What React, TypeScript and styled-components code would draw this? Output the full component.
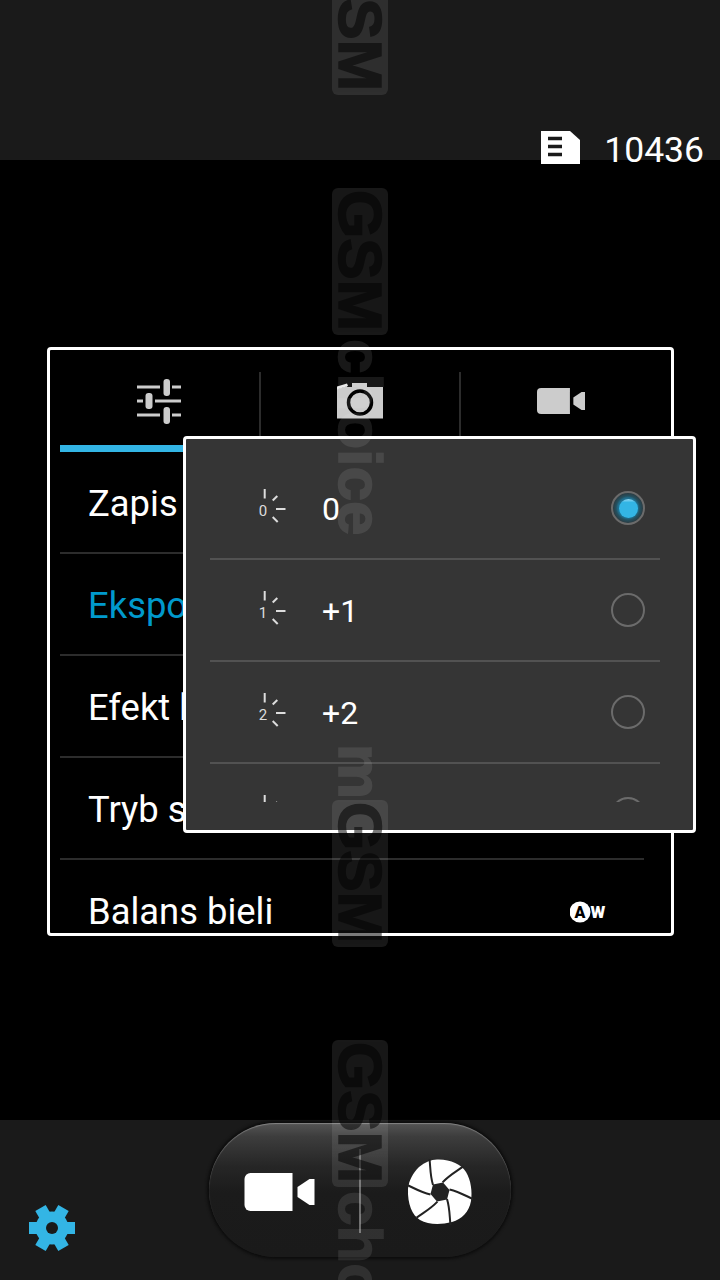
import React from "react";
import styled, { createGlobalStyle } from "styled-components";

const Global = createGlobalStyle`
  html, body { margin: 0; padding: 0; background: #000; }
  * { box-sizing: border-box; }
`;

const Screen = styled.div`
  position: relative;
  width: 720px;
  height: 1280px;
  overflow: hidden;
  display: flex;
  flex-direction: column;
  background: #000;
  color: #fff;
  font-family: Roboto, "Liberation Sans", sans-serif;
`;

const TopBar = styled.div`
  position: relative;
  flex: 0 0 160px;
  background: #1a1a1a;
`;

const Counter = styled.div`
  position: absolute;
  top: 131px;
  right: 16px;
  display: flex;
  align-items: flex-start;
  gap: 24px;
  font-size: 35.5px;
  line-height: 38px;
  color: #fff;
`;

const Viewfinder = styled.div`
  position: relative;
  flex: 1;
  padding: 187px 0 0 47px;
`;

const Panel = styled.div`
  width: 627px;
  height: 589px;
  border: 3px solid #fff;
  border-radius: 4px;
  padding: 0 10px;
  overflow: hidden;
  background: #000;
`;

const TabStrip = styled.div`
  display: flex;
  height: 102px;
`;

const Tab = styled.div<{ $active?: boolean }>`
  flex: 0 0 198.5px;
  display: flex;
  align-items: center;
  justify-content: center;
  padding-top: 7px;
  border-bottom: 7px solid ${(p) => (p.$active ? "#33b5e5" : "transparent")};

  &:last-child {
    flex: 1;
  }
`;

const TabDivider = styled.div`
  flex: 0 0 2px;
  margin: 22px 0 14px;
  background: #2c2c2c;
`;

const SettingRow = styled.div`
  height: 102px;
  margin-right: 17px;
  padding: 3px 37px 0 28px;
  display: flex;
  align-items: center;
  justify-content: space-between;
  border-bottom: 2px solid #2c2c2c;
`;

const SettingLabel = styled.span<{ $active?: boolean }>`
  font-size: 36.4px;
  white-space: nowrap;
  color: ${(p) => (p.$active ? "#0099cc" : "#fff")};
`;

const Popup = styled.div`
  position: absolute;
  top: 276px;
  left: 183px;
  width: 513px;
  height: 397px;
  border: 3px solid #fff;
  border-radius: 4px;
  padding: 19px 33px 0 24px;
  background: #353535;
`;

const PopupList = styled.div`
  height: 344px;
  overflow: hidden;
`;

const PopupRow = styled.div`
  height: 102px;
  padding: 0 15px 0 48px;
  display: flex;
  align-items: center;
  gap: 36px;
  border-bottom: 2px solid #525252;
`;

const PopupLabel = styled.span`
  flex: 1;
  padding-top: 1px;
  font-size: 32px;
  color: #fff;
`;

const Radio = styled.span<{ $checked?: boolean }>`
  flex: 0 0 34px;
  width: 34px;
  height: 34px;
  border-radius: 50%;
  border: 2px solid #6b6b6b;
  display: flex;
  align-items: center;
  justify-content: center;
  background: ${(p) =>
    p.$checked
      ? "radial-gradient(circle, #1f6f8f 0 10px, #24505f 12px, #2c3c43 15px)"
      : "transparent"};
`;

const RadioDot = styled.span`
  width: 19px;
  height: 19px;
  border-radius: 50%;
  background: linear-gradient(#9adcf5 0, #33b5e5 18%, #33b5e5 100%);
`;

const BottomBar = styled.div`
  flex: 0 0 160px;
  display: grid;
  grid-template-columns: 1fr auto 1fr;
  background: #1a1a1a;
`;

const SettingsSlot = styled.div`
  padding: 85px 0 0 29px;
`;

const Pill = styled.div`
  width: 302px;
  height: 134px;
  margin-top: 3px;
  padding-top: 4px;
  border-radius: 67px;
  display: flex;
  align-items: center;
  background: linear-gradient(#555 0, #3d3d3d 10%, #262626 32%, #1b1b1b 52%, #1a1a1a 100%);
  box-shadow: inset 0 1px 1px rgba(255, 255, 255, 0.28), 0 0 3px 2px #0c0c0c;
`;

const PillHalf = styled.div<{ $inset: number }>`
  flex: 0 0 150px;
  display: flex;
  align-items: center;
  padding-left: ${(p) => p.$inset}px;
`;

const PillDivider = styled.div`
  flex: 0 0 2px;
  height: 84px;
  margin-top: -2px;
  background: #6e6e6e;
`;

const Mark = styled.div<{ $top: number }>`
  position: absolute;
  top: ${(p) => p.$top}px;
  left: 332px;
  width: 56px;
  display: flex;
  flex-direction: row;
  writing-mode: vertical-rl;
  font-family: "Liberation Sans", Arial, sans-serif;
  font-weight: 700;
  font-size: 62px;
  line-height: 56px;
  white-space: nowrap;
  pointer-events: none;
`;

const MarkBox = styled.span`
  display: block;
  flex: 0 0 147px;
  height: 147px;
  width: 56px;
  border-radius: 6px;
  padding-top: 2px;
  overflow: hidden;
  background: rgba(255, 255, 255, 0.095);
`;

const MarkBoxLetters = styled.span`
  display: block;
  color: #000;
  opacity: 0.52;
  -webkit-text-stroke: 1.5px #000;
`;

const MarkText = styled.span`
  display: block;
  width: 56px;
  padding-top: 4px;
  color: #fff;
  opacity: 0.095;
  -webkit-text-stroke: 1.5px #fff;
`;

const SdIcon = () => (
  <svg width="39" height="33" viewBox="0 0 39 33">
    <path d="M0 0H29L39 9V33H0Z" fill="#fff" />
    <path d="M7 7.500H21M7 15.500H21M7 23.500H21" stroke="#1a1a1a" strokeWidth="3.400" />
  </svg>
);

const SlidersIcon = () => (
  <svg width="44" height="46" viewBox="0 0 44 46">
    <g stroke="#ccc" strokeWidth="3">
      <path d="M0 9H23M35 9H44M0 23H6M18 23H44M0 37H23M35 37H44" />
    </g>
    <g fill="#ccc">
      <rect x="26.500" y="1" width="6.500" height="17" rx="3" />
      <rect x="8.500" y="15" width="7" height="16" rx="3" />
      <rect x="26.500" y="29" width="6.500" height="17" rx="3" />
    </g>
  </svg>
);

const CameraIcon = () => (
  <svg width="46" height="36" viewBox="0 0 46 36">
    <path d="M0 6L10 3V4L15 4V0H30V4H46V35.500H0Z" fill="#ccc" />
    <path d="M0 3.500L10 0.500L11 3L0 6.500Z" fill="#e8e8e8" />
    <circle cx="23" cy="19.500" r="11.500" fill="#ccc" stroke="#000" strokeWidth="3.500" />
  </svg>
);

const VideoIcon = ({ fill, w, h }: { fill: string; w: number; h: number }) => (
  <svg width={w} height={h} viewBox="0 0 70 38">
    <path d="M6 0H48V38H6A6 6 0 0 1 0 32V6A6 6 0 0 1 6 0Z" fill={fill} />
    <path d="M70 6V32H65L53 24V14L65 6Z" fill={fill} />
  </svg>
);

const ExposureIcon = ({ digit }: { digit: string }) => (
  <svg width="28" height="38" viewBox="0 0 28 38">
    <g stroke="#ddd" strokeWidth="2" fill="none">
      <path d="M6.700 0V9.500" />
      <path d="M14.700 11.500L19.300 7" />
      <path d="M18 20H27.500" />
      <path d="M14.700 28L19.700 33" />
    </g>
    <text
      x="5"
      y="27"
      fill="#ddd"
      fontSize="15"
      textAnchor="middle"
      fontFamily="Roboto, sans-serif"
    >
      {digit}
    </text>
  </svg>
);

const AwIcon = () => (
  <svg width="37" height="22" viewBox="0 0 37 22">
    <circle cx="10" cy="11" r="10.500" fill="#fff" />
    <text
      x="10"
      y="17"
      fontSize="16"
      fontWeight="900"
      fill="#000"
      textAnchor="middle"
      fontFamily="Roboto, sans-serif"
    >
      A
    </text>
    <text
      x="20.500"
      y="17"
      fontSize="17"
      fontWeight="900"
      fill="#fff"
      fontFamily="Roboto, sans-serif"
    >
      W
    </text>
  </svg>
);

const GearIcon = () => (
  <svg width="46" height="46" viewBox="-23 -23 46 46">
    <circle r="16.500" fill="#33b5e5" />
    {[0, 60, 120].map((a) => (
      <rect key={a} x="-23" y="-6" width="46" height="12" fill="#33b5e5" transform={`rotate(${a})`} />
    ))}
    <circle r="6" fill="#1a1a1a" />
  </svg>
);

const ShutterIcon = () => (
  <svg width="66" height="66" viewBox="-33 -33 66 66">
    <path
      d="M-3 -32.500C10 -33 21 -28 26 -20C31 -12 32.500 0 31 9C29 20 22 27 12 30C0 33 -12 32.500 -20 28C-28 23 -32.500 12 -32 -3C-31 -12 -27 -19 -21 -25C-15 -30 -9 -32.500 -3 -32.500Z"
      fill="#fff"
    />
    {[0, 60, 120, 180, 240, 300].map((a) => (
      <path
        key={a}
        d="M-10.500 -33C-9.500 -25 -10 -17 -7 -7"
        transform={`rotate(${a})`}
        stroke="#222"
        strokeWidth="2"
        fill="none"
      />
    ))}
    <path d="M-7 -7.500L3 -9.500L9.500 -2L7 7.500L-3 9.500L-9.500 2Z" fill="#222" />
  </svg>
);

const settings = [
  { label: "Zapis lokalizacji" },
  { label: "Ekspozycja", active: true },
  { label: "Efekt kolorów" },
  { label: "Tryb sceny" },
  { label: "Balans bieli", aw: true },
];

const exposures = [
  { digit: "0", label: "0", checked: true },
  { digit: "1", label: "+1" },
  { digit: "2", label: "+2" },
  { digit: "3", label: "+3" },
];

const GsmBox = () => (
  <MarkBox>
    <MarkBoxLetters>GSM</MarkBoxLetters>
  </MarkBox>
);

export default function App() {
  return (
    <Screen>
      <Global />
      <TopBar>
        <Counter>
          <SdIcon />
          <span>10436</span>
        </Counter>
      </TopBar>

      <Viewfinder>
        <Panel>
          <TabStrip>
            <Tab $active>
              <SlidersIcon />
            </Tab>
            <TabDivider />
            <Tab>
              <CameraIcon />
            </Tab>
            <TabDivider />
            <Tab>
              <VideoIcon fill="#ccc" w={48} h={28} />
            </Tab>
          </TabStrip>
          {settings.map((s) => (
            <SettingRow key={s.label}>
              <SettingLabel $active={s.active}>{s.label}</SettingLabel>
              {s.aw && <AwIcon />}
            </SettingRow>
          ))}
        </Panel>

        <Popup>
          <PopupList>
            {exposures.map((e) => (
              <PopupRow key={e.digit}>
                <ExposureIcon digit={e.digit} />
                <PopupLabel>{e.label}</PopupLabel>
                <Radio $checked={e.checked}>{e.checked && <RadioDot />}</Radio>
              </PopupRow>
            ))}
          </PopupList>
        </Popup>
      </Viewfinder>

      <BottomBar>
        <SettingsSlot>
          <GearIcon />
        </SettingsSlot>
        <Pill>
          <PillHalf $inset={35}>
            <VideoIcon fill="#fff" w={71} h={38} />
          </PillHalf>
          <PillDivider />
          <PillHalf $inset={46}>
            <ShutterIcon />
          </PillHalf>
        </Pill>
        <div />
      </BottomBar>

      <Mark $top={-52}>
        <GsmBox />
      </Mark>
      <Mark $top={188}>
        <GsmBox />
        <MarkText>choice</MarkText>
      </Mark>
      <Mark $top={740}>
        <MarkText>m</MarkText>
      </Mark>
      <Mark $top={800}>
        <GsmBox />
      </Mark>
      <Mark $top={1040}>
        <GsmBox />
        <MarkText>choice</MarkText>
      </Mark>
    </Screen>
  );
}
